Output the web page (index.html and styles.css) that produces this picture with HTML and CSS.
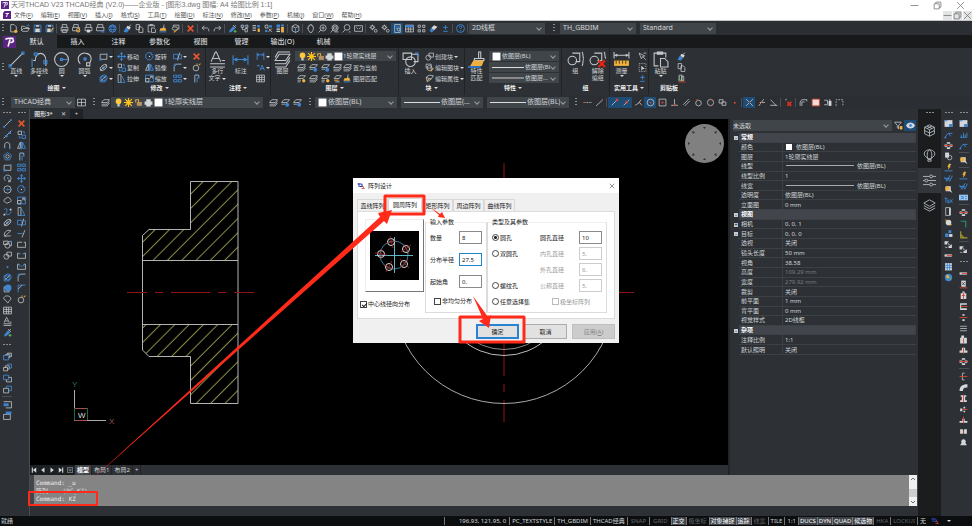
FILE: index.html
```html
<!DOCTYPE html>
<html lang="zh-CN">
<head>
    <meta charset="UTF-8">
    <meta name="viewport" content="width=device-width, initial-scale=1.0">
    <title>天河THCAD V23</title>
    <link rel="stylesheet" href="styles.css">
</head>
<body>
    <div class="app">
        <!-- Title and menu -->
        <header class="titlebar">
            <span class="app-icon" data-icon="logo"></span>
            <span class="app-title">天河THCAD V23 THCAD经典 (V2.0)——企业版 - [图形3.dwg 图幅: A4 绘图比例 1:1]</span>
            <div class="window-buttons" data-tools="min restore close"></div>
        </header>
        <nav class="menubar">
            <span class="app-icon" data-icon="file"></span>
            <a href="#">文件(<u>F</u>)</a>
            <a href="#">编辑(<u>E</u>)</a>
            <a href="#">视图(<u>V</u>)</a>
            <a href="#">插入(<u>I</u>)</a>
            <a href="#">格式(<u>S</u>)</a>
            <a href="#">工具(<u>T</u>)</a>
            <a href="#">绘图(<u>D</u>)</a>
            <a href="#">标注(<u>N</u>)</a>
            <a href="#">修改(<u>M</u>)</a>
            <a href="#">参数(<u>P</u>)</a>
            <a href="#">机械(<u>J</u>)</a>
            <a href="#">窗口(<u>W</u>)</a>
            <a href="#">帮助(<u>H</u>)</a>
            <div class="child-buttons" data-tools="min restore close"></div>
        </nav>

        <!-- Standard toolbar -->
        <div class="bar">
            <span class="grip"></span>
            <div class="tools" data-tools="new open save saveas | print preview publish plot globe | brush copy paste pasteas copydoc | erase | undo redo | dropper tree blocks xref palette | cube | hand zoom zoomwin zoomprev zoomext | gears gears sheet* table calc eraser plusminus | help |"></div>
            <div class="combo w76"><select aria-label="视觉样式"><option>2D线框</option></select></div>
            <span class="grip spaced"></span>
            <div class="combo w76"><select aria-label="标注样式"><option>TH_GBDIM</option></select></div>
            <div class="combo w76 gap-left"><select aria-label="文字样式"><option>Standard</option></select></div>
        </div>

        <!-- Ribbon tabs -->
        <nav class="ribbon-tabs">
            <span class="ribbon-logo" data-icon="logo"></span>
            <button class="active">默认</button>
            <button>插入</button>
            <button>注释</button>
            <button>参数化</button>
            <button>视图</button>
            <button>管理</button>
            <button>输出(O)</button>
            <button>机械</button>
        </nav>

        <!-- Ribbon -->
        <div class="ribbon">
            <section class="panel draw">
                <div class="panel-body">
                    <span class="grip"></span>
                    <button class="big"><i data-icon="line"></i>直线<b class="caret"></b></button>
                    <button class="big"><i data-icon="pline"></i>多段线<b class="caret"></b></button>
                    <button class="big"><i data-icon="circle"></i>圆<b class="caret"></b></button>
                    <button class="big"><i data-icon="arc"></i>圆弧<b class="caret"></b></button>
                    <div class="stack">
                        <button class="small"><i data-icon="rect"></i><b class="caret"></b></button>
                        <button class="small"><i data-icon="ellipse"></i><b class="caret"></b></button>
                        <button class="small"><i data-icon="region"></i><b class="caret"></b></button>
                    </div>
                </div>
                <h2>绘图<b class="caret"></b></h2>
            </section>
            <section class="panel modify">
                <div class="panel-body">
                    <div class="stack">
                        <button class="small"><i data-icon="move"></i>移动</button>
                        <button class="small"><i data-icon="copyobj"></i>复制</button>
                        <button class="small"><i data-icon="stretch"></i>拉伸</button>
                    </div>
                    <div class="stack">
                        <button class="small"><i data-icon="rotate"></i>旋转</button>
                        <button class="small"><i data-icon="mirror"></i>镜像</button>
                        <button class="small"><i data-icon="scale"></i>缩放</button>
                    </div>
                    <div class="stack">
                        <button class="small"><i data-icon="trim"></i><b class="caret"></b></button>
                        <button class="small"><i data-icon="fillet"></i><b class="caret"></b></button>
                        <button class="small"><i data-icon="array"></i><b class="caret"></b></button>
                    </div>
                    <div class="stack" data-tools="erase explode offset"></div>
                </div>
                <h2>修改<b class="caret"></b></h2>
            </section>
            <section class="panel annotate">
                <div class="panel-body">
                    <button class="big"><i data-icon="mtext"></i><span>多行<br>文字 <b class="caret"></b></span></button>
                    <button class="big"><i data-icon="dim"></i>标注</button>
                    <div class="stack">
                        <button class="small"><i data-icon="dimlin"></i><b class="caret"></b></button>
                        <button class="small"><i data-icon="leader"></i><b class="caret"></b></button>
                        <button class="small"><i data-icon="table2"></i></button>
                    </div>
                </div>
                <h2>注释<b class="caret"></b></h2>
            </section>
            <section class="panel layer">
                <div class="panel-body">
                    <button class="big"><i data-icon="layers"></i>图层</button>
                    <div class="stack">
                        <div class="combo small-combo">
                            <i data-icon="bulb"></i><i data-icon="sun"></i><i data-icon="lock"></i><i data-icon="printer"></i><i data-icon="swatch"></i>
                            <select aria-label="图层"><option>1轮廓实线层</option></select>
                        </div>
                        <div class="tool-row"><div class="tools" data-tools="layer layerb layerb layer"></div><button class="small"><i data-icon="layer"></i>置为当前</button></div>
                        <div class="tool-row"><div class="tools" data-tools="layero layer layero layery"></div><button class="small"><i data-icon="pasteas"></i>图层匹配</button></div>
                    </div>
                </div>
                <h2>图层<b class="caret"></b></h2>
            </section>
            <section class="panel block">
                <div class="panel-body">
                    <button class="big"><i data-icon="insert"></i>插入</button>
                    <div class="stack">
                        <button class="small"><i data-icon="block"></i>创建块<b class="caret"></b></button>
                        <button class="small"><i data-icon="blockedit"></i>编辑图块<b class="caret"></b></button>
                        <button class="small"><i data-icon="blockattr"></i>编辑属性<b class="caret"></b></button>
                    </div>
                </div>
                <h2>块<b class="caret"></b></h2>
            </section>
            <section class="panel props">
                <div class="panel-body">
                    <button class="big"><i data-icon="match"></i>特性<br>匹配</button>
                    <div class="stack">
                        <div class="combo small-combo"><i data-icon="swatch"></i><select aria-label="颜色"><option>依图层(BL)</option></select></div>
                        <div class="combo small-combo"><span class="sample"></span><select aria-label="线型"><option>依图层(BL)</option></select></div>
                        <div class="combo small-combo"><span class="sample thick"></span><select aria-label="线宽"><option>依图层...</option></select></div>
                    </div>
                </div>
                <h2>特性<b class="caret"></b></h2>
            </section>
            <section class="panel group">
                <div class="panel-body">
                    <button class="big"><i data-icon="group"></i>组</button>
                    <button class="big"><i data-icon="ungroup"></i>解除<br>编组</button>
                </div>
                <h2>组</h2>
            </section>
            <section class="panel utility">
                <div class="panel-body">
                    <button class="big"><i data-icon="measure"></i>测量<b class="caret"></b></button>
                    <div class="stack" data-tools="pick select plusminus"></div>
                </div>
                <h2>实用工具<b class="caret"></b></h2>
            </section>
            <section class="panel clipboard">
                <div class="panel-body">
                    <button class="big"><i data-icon="paste"></i>粘贴<b class="caret"></b></button>
                    <div class="stack" data-tools="brush copy copybase"></div>
                </div>
                <h2>剪贴板</h2>
            </section>
        </div>

        <!-- Layer and properties toolbar -->
        <div class="bar layer-bar">
            <span class="grip"></span>
            <div class="combo w64 gap-left"><select aria-label="工作空间"><option>THCAD经典</option></select></div>
            <div class="tools" data-tools="grid"></div>
            <span class="grip spaced"></span>
            <div class="tools" data-tools="layer"></div>
            <div class="combo w152">
                <i data-icon="bulb"></i><i data-icon="sun"></i><i data-icon="lock"></i><i data-icon="printer"></i><i data-icon="swatch"></i>
                <select aria-label="当前图层"><option>1轮廓实线层</option></select>
            </div>
            <div class="tools gap-left" data-tools="layer layerb layerb"></div>
            <span class="grip spaced"></span>
            <div class="combo w82"><i data-icon="swatch"></i><select aria-label="当前颜色"><option>依图层(BL)</option></select></div>
            <div class="combo w82 gap-left"><span class="sample long"></span><select aria-label="当前线型"><option>依图层(...</option></select></div>
            <div class="combo w82 gap-left"><span class="sample long"></span><select aria-label="当前线宽"><option>依图层(BL)</option></select></div>
            <span class="grip spaced"></span>
            <div class="tools" data-tools="snaptrack snapfrom | snapend* snapmid* snapint snapcen* snapnode snapperp snappar snaptan snapquad snapins snapnear | snapx* snapext snapang | snapoff | snaparc snapbox snapset snapdot"></div>
        </div>

        <div class="workspace">
            <!-- Draw and modify toolbars -->
            <aside class="left-tools">
                <div class="column"><span class="grip-h"></span><div class="tools" data-tools="line xline polyline polygon rect arc circle cloud spline ellipse earc insert block point region hatch boundary table2 mtext dropper"></div>
                    <span class="grip-h next"></span><div class="tools" data-tools="front back above under | viewl viewr"></div></div>
                <div class="column"><span class="grip-h"></span><div class="tools" data-tools="erase copyobj mirror offset array move rotate scale stretch trim extend break breakat join fillet chamfer explode"></div></div>
            </aside>

            <main class="center">
                <div class="doc-tabs">
                    <button class="doc">图形3*</button>
                    <button aria-label="关闭">✕</button>
                    <button class="add" aria-label="新建">+</button>
                </div>
                <div class="middle">
                    <div class="viewport">
                        <div class="canvas">
                            <svg class="drawing" aria-label="图形">
                                <defs>
                                    <pattern id="hatch" width="10.13" height="10" patternUnits="userSpaceOnUse" patternTransform="rotate(45)">
                                        <path d="M8.7 0V10" stroke="#90904a" stroke-width="1"/>
                                    </pattern>
                                </defs>
                                <g transform="translate(-30 -119)" fill="none">
                                    <g fill="url(#hatch)">
                                        <path d="M142.5 260.5V235.5L149 229.5H190.5V181.5H238V260.5Z"/>
                                        <path d="M142.5 324.5V350L149 356.5H190.5V403.5H238V324.5Z"/>
                                    </g>
                                    <path d="M142.5 235.5L149 229.5H190.5V181.5H238V403.5H190.5V356.5H149L142.5 350ZM142.5 260.5H238M142.5 324.5H238" stroke="#b4b4b4"/>
                                    <path d="M127 292.5h20m8 0h8m8 0h39m8 0h8m8 0h20M619 292.5h15M504 163v25M504 343v33m0 8v8m0 8v22" stroke="#8e1515"/>
                                    <circle cx="504" cy="292.5" r="111" stroke="#aaa"/>
                                    <circle cx="504" cy="292.5" r="63" stroke="#bbb"/>
                                    <circle cx="504" cy="292.5" r="57" stroke="#888"/>
                                    <circle cx="704.5" cy="143.5" r="19.5" fill="#808080"/>
                                    <path d="M703 127h3l-1.5 2zM703 160h3l-1.5-2zM688 142v3l2-1.5zM721 142v3l-2-1.5zM692 131l3 1-2 2zM717 131l-3 1 2 2zM692 156l3-1-2-2zM717 156l-3-1 2-2z" fill="#333"/>
                                    <path d="M74.5 390V420.5H106" stroke="#aaa"/>
                                    <path d="M75 408.5H87.5M75 420.5H87" stroke="#a05050"/>
                                    <path d="M87.5 408V420M74.5 408V420" stroke="#1d6b45"/>
                                    <text class="axis" x="78" y="418" fill="#ddd">W</text>
                                    <text class="axis" x="109" y="424" fill="#9a5555">X</text>
                                    <text class="axis" x="72" y="387" fill="#2a7550">Y</text>
                                </g>
                            </svg>

                            <!-- Array dialog -->
                            <form class="dialog" role="dialog" aria-label="阵列设计">
                                <div class="dialog-title"><i data-icon="dlg"></i>阵列设计<button type="button" class="dialog-close" data-icon="closedark" aria-label="关闭"></button></div>
                                <div class="dialog-tabs">
                                    <button type="button">直线阵列</button>
                                    <button type="button" class="active">圆周阵列</button>
                                    <button type="button">矩形阵列</button>
                                    <button type="button">周边阵列</button>
                                    <button type="button">曲线阵列</button>
                                </div>
                                <div class="dialog-page">
                                    <div class="preview-col">
                                        <div class="preview">
                                            <svg viewBox="0 0 49 49" fill="none">
                                                <rect width="49" height="49" fill="#000"/>
                                                <circle cx="24" cy="24" r="14" stroke="#2f8296"/>
                                                <path d="M5 24.5H43M24.5 6V42" stroke="#5fb6c6"/>
                                                <g stroke="#ddd"><circle cx="21" cy="11" r="3.5"/><circle cx="36" cy="18" r="3.5"/><circle cx="34" cy="33" r="3.5"/><circle cx="19" cy="36" r="3.5"/><circle cx="11" cy="23" r="3.5"/></g>
                                                <path d="M20 5l3 12M17 12l9-2M31 21l10-7M34 13l5 10M30 28l9 9M38 28l-8 9M16 41l6-11M14 34l9 4M5 22l12 2M11 18v10" stroke="#b32626" stroke-width=".8"/>
                                            </svg>
                                        </div>
                                        <label><input type="checkbox" checked>中心线径向分布</label>
                                    </div>
                                    <fieldset class="inputs">
                                        <legend>输入参数</legend>
                                        <label>数量<input type="text" value="8"></label>
                                        <label>分布半径<input type="text" class="focus" value="27.5"></label>
                                        <label>起始角<input type="text" value="0."></label>
                                        <label class="check"><input type="checkbox">非均匀分布</label>
                                    </fieldset>
                                    <fieldset class="types">
                                        <legend>类型及其参数</legend>
                                        <label><input type="radio" name="hole" checked>圆孔</label>
                                        <label class="field">圆孔直径<input type="text" value="10"></label>
                                        <label><input type="radio" name="hole">双圆孔</label>
                                        <label class="field off">内孔直径<input type="text" value="5." disabled></label>
                                        <label class="field off second">外孔直径<input type="text" value="6." disabled></label>
                                        <label><input type="radio" name="hole">螺纹孔</label>
                                        <label class="field off">公称直径<input type="text" value="5." disabled></label>
                                        <label><input type="radio" name="hole">任意选择集</label>
                                        <label class="off polar"><input type="checkbox" disabled>极坐标阵列</label>
                                    </fieldset>
                                </div>
                                <div class="dialog-footer">
                                    <button type="button" class="ok">确定</button>
                                    <button type="button">取消</button>
                                    <button type="button" disabled>应用(<u>A</u>)</button>
                                </div>
                            </form>
                        </div>
                        <div class="layout-tabs">
                            <div class="tools" data-tools="first prev next last list"></div>
                            <button class="active">模型</button>
                            <button>布局1</button>
                            <button>布局2</button>
                            <button class="add" aria-label="新建布局">+</button>
                        </div>
                    </div>

                    <!-- Properties palette -->
                    <aside class="properties">
                        <div class="selection">
                            <div class="combo"><select aria-label="选择"><option>未选取</option></select></div>
                            <div class="tools" data-tools="filter eye*"></div>
                        </div>
                        <table>
                            <colgroup><col class="col-toggle"><col class="col-name"><col></colgroup>
                            <tr class="head"><td>-</td><th colspan="2">常规</th></tr>
                            <tr><td></td><th>颜色</th><td><span class="white-box"></span>依图层(BL)</td></tr>
                            <tr><td></td><th>图层</th><td>1轮廓实线层</td></tr>
                            <tr><td></td><th>线型</th><td><span class="rule"></span>依图层(BL)</td></tr>
                            <tr><td></td><th>线型比例</th><td>1</td></tr>
                            <tr><td></td><th>线宽</th><td><span class="rule"></span>依图层(BL)</td></tr>
                            <tr><td></td><th>透明度</th><td>依图层(BL)</td></tr>
                            <tr><td></td><th>立面图</th><td>0 mm</td></tr>
                            <tr class="head"><td>-</td><th colspan="2">视图</th></tr>
                            <tr class="sub"><td>+</td><th>相机</th><td>0, 0, 1</td></tr>
                            <tr class="sub"><td>-</td><th>目标</th><td>0, 0, 0</td></tr>
                            <tr><td></td><th>透视</th><td>关闭</td></tr>
                            <tr><td></td><th>镜头长度</th><td>50 mm</td></tr>
                            <tr><td></td><th>视角</th><td>38.58</td></tr>
                            <tr class="dim"><td></td><th>高度</th><td>109.29 mm</td></tr>
                            <tr class="dim"><td></td><th>宽度</th><td>279.92 mm</td></tr>
                            <tr><td></td><th>裁剪</th><td>关闭</td></tr>
                            <tr><td></td><th>前平面</th><td>1 mm</td></tr>
                            <tr><td></td><th>背平面</th><td>0 mm</td></tr>
                            <tr><td></td><th>视觉样式</th><td>2D线框</td></tr>
                            <tr class="head"><td>-</td><th colspan="2">杂项</th></tr>
                            <tr><td></td><th>注释比例</th><td>1:1</td></tr>
                            <tr><td></td><th>默认照明</th><td>关闭</td></tr>
                        </table>
                    </aside>
                </div>

                <!-- Command line -->
                <div class="command">
                    <div class="command-text">
                        <p>Command: _u</p>
                        <p class="clipped">阵列... (PC_KZ)</p>
                        <p><label for="cmd">Command:</label> <input id="cmd" type="text" value="KZ"></p>
                    </div>
                    <div class="scroll"><span data-icon="up"></span><b></b><span data-icon="down"></span></div>
                </div>
            </main>

            <aside class="side-tabs">
                <span class="grip-h"></span>
                <button data-icon="box3d" aria-label="模型"></button>
                <button data-icon="balloon" aria-label="渲染"></button>
                <button data-icon="sliders" class="active" aria-label="特性"></button>
                <button data-icon="stack" aria-label="图层"></button>
            </aside>

            <!-- Mechanical toolbars -->
            <aside class="right-tools">
                <div class="column"><span class="grip-h"></span><div class="tools" data-tools="frame note bearing sheet2 bolt rough magnify textb door gear parts part pin bom globe2"></div></div>
                <div class="column"><span class="grip-h"></span><div class="tools" data-tools="frame dimb note | magnify | bolt rough dimtag | bearing corner angle | part"></div>
                    <span class="grip-h next"></span><div class="tools" data-tools="pin shaft nut section cross spring crate screw bearing | axis elbow seat hub flange key boss"></div></div>
            </aside>
        </div>

        <!-- Status bar -->
        <footer class="status">
            <span class="ready">就绪</span>
            <span class="coords">196.93, 121.95, 0</span>
            <button class="on">PC_TEXTSTYLE</button>
            <button class="on">TH_GBDIM</button>
            <button class="on">THCAD经典</button>
            <button class="wide">SNAP</button>
            <button class="wide">GRID</button>
            <button class="lit">正交</button>
            <button>极坐标</button>
            <button class="lit">对象捕捉</button>
            <button class="lit">追踪</button>
            <button>线宽</button>
            <button class="on">TILE</button>
            <button class="on">1:1</button>
            <button class="lit">DUCS</button>
            <button class="lit">DYN</button>
            <button class="lit">QUAD</button>
            <button class="lit">候选物</button>
            <button>HKA</button>
            <button>LOCKUI</button>
            <button class="on">无</button>
            <span class="tray"><i data-icon="dlg"></i><b class="caret"></b></span>
        </footer>

        <!-- Step markers -->
        <svg class="markers" aria-hidden="true">
            <g fill="none" stroke="#ff2a1a" stroke-width="3" stroke-linejoin="round">
                <rect x="385" y="196" width="39" height="18"/>
                <rect x="460" y="317" width="64" height="25"/>
                <rect x="29" y="492" width="68" height="13" stroke-width="2"/>
            </g>
            <g fill="#ff2a1a">
                <path d="M88 483L380 217L378 213L392 210L387 224L384 221Z"/>
                <path d="M430 207L440 214L442 212L445 218L438 217L439 215Z"/>
                <path d="M473 296L488 317L491 315L489 328L479 321L483 319Z"/>
            </g>
        </svg>
    </div>
    <script src="script.js"></script>
</body>
</html>
```
FILE: styles.css
```css
/* General Styling */
* {
    box-sizing: border-box;
}

body {
    margin: 0;
    background: #2d3135;
    color: #d2d5d8;
    font-family: "Noto Sans", "Noto Sans CJK SC", sans-serif;
    font-size: 6px;
    line-height: 8px;
}

button, input, select {
    font: inherit;
    color: inherit;
    margin: 0;
    padding: 0;
    border: 0;
    background: none;
}

a {
    color: inherit;
    text-decoration: none;
}

i {
    font-style: normal;
}

svg {
    display: block;
}

.app {
    position: relative;
    display: flex;
    flex-direction: column;
    min-height: 100vh;
    overflow: hidden;
}

/* Icon strokes */
.s { fill: none; stroke: #c3c7ca; stroke-width: 1.4; }
.b { fill: none; stroke: #3f86d2; stroke-width: 1.6; }
.r { fill: none; stroke: #d8452f; stroke-width: 1.6; }
.o { fill: none; stroke: #e8a63c; stroke-width: 1.8; }
.k { fill: none; stroke: #333; stroke-width: 1.4; }
.sf { fill: #d4d7da; }
.bf { fill: #3f86d2; }
.rf { fill: #d8452f; }
.of { fill: #f0b040; }

/* Title and menu */
.titlebar, .menubar {
    display: flex;
    align-items: center;
    height: 10px;
    background: #fff;
    color: #777;
}

.titlebar {
    font-family: "Liberation Sans", "Noto Sans CJK SC", sans-serif;
    font-size: 7px;
}

.titlebar .app-icon {
    width: 11px;
    padding-left: 1px;
}

.app-icon svg {
    width: 8px;
    height: 8px;
}

.menubar {
    height: 11px;
    gap: 8px;
    border-bottom: 1px solid #c4c6c8;
    color: #555;
}

.menubar .app-icon {
    margin: 0 -5px 0 3px;
}

.window-buttons, .child-buttons {
    display: flex;
    margin-left: auto;
}

.window-buttons {
    gap: 11px;
    padding-right: 6px;
}

.child-buttons {
    gap: 1px;
}

.child-buttons .tool {
    width: 9px;
    height: 9px;
    background: #e2e4e6;
}

.window-buttons svg {
    width: 7px;
    height: 7px;
}

.child-buttons svg {
    width: 5px;
    height: 5px;
}

.titlebar .s, .menubar .s {
    stroke: #777;
}

/* Toolbars */
.bar {
    display: flex;
    align-items: center;
    height: 14px;
    background: #2b2f34;
}

.tools {
    display: flex;
}

.tool {
    display: flex;
    align-items: center;
    justify-content: center;
    width: 12px;
    height: 11px;
}

.tool svg, .small svg, .combo svg {
    width: 9px;
    height: 9px;
}

.tool.on {
    background: #1f4c75;
}

.sep {
    width: 1px;
    height: 9px;
    margin: 1px;
    background: #4a4f54;
}

.grip {
    width: 2px;
    height: 9px;
    margin: 0 3px 0 2px;
    background: repeating-linear-gradient(#8a8e92 0 1px, transparent 1px 3px);
}

.grip.spaced {
    margin: 0 5px 0 8px;
}

.layer-bar .grip.spaced {
    margin: 0 4px 0 6px;
}

.grip-h {
    width: 8px;
    height: 1px;
    margin: 3px auto 5px;
    background: repeating-linear-gradient(90deg, #8a8e92 0 2px, transparent 2px 3px);
}

.grip-h.next {
    margin: 6px auto;
}

.gap-left {
    margin-left: 4px;
}

.combo {
    position: relative;
    display: flex;
    align-items: center;
    height: 11px;
    padding: 0 9px 0 3px;
    gap: 1px;
    background: #40454a;
    font-size: 7px;
}

.combo i {
    flex: none;
}

.combo select {
    flex: 1;
    min-width: 0;
    height: 10px;
    appearance: none;
    outline: none;
}

.combo option {
    background: #40454a;
}

.combo::after {
    content: "";
    position: absolute;
    right: 4px;
    top: 3px;
    width: 3px;
    height: 3px;
    border: solid #9a9ea2;
    border-width: 0 1px 1px 0;
    transform: rotate(45deg);
}

.w64 { width: 64px; }
.w76 { width: 76px; }
.w82 { width: 82px; }
.w152 { width: 152px; }

.sample {
    width: 32px;
    height: 1px;
    background: #ddd;
}

.sample.thick {
    height: 2px;
    background: #888;
}

.sample.long {
    width: 36px;
}

/* Ribbon tabs */
.ribbon-tabs {
    display: flex;
    height: 13px;
    background: #17191b;
    font-size: 7px;
}

.ribbon-tabs button {
    width: 41px;
    font-weight: 500;
}

.ribbon-tabs .active {
    background: #2d3135;
}

.ribbon-logo {
    padding: 1px 0 0 3px;
    background: #2d3135;
}

.ribbon-logo svg {
    width: 13px;
    height: 13px;
}

/* Ribbon */
.ribbon {
    display: flex;
    height: 47px;
    background: #2d3135;
}

.panel {
    display: flex;
    flex-direction: column;
    border-right: 1px solid #202326;
}

.panel:last-child {
    border-right: 0;
}

.panel h2 {
    display: flex;
    align-items: center;
    justify-content: center;
    gap: 2px;
    margin: 0;
    font-size: 6px;
    line-height: 8px;
    font-weight: 700;
    color: #f0f0f0;
}

.panel-body {
    display: flex;
    height: 36px;
    padding-top: 3px;
}

.panel-body > .grip {
    align-self: center;
    margin-right: 1px;
}

.draw { width: 114px; }
.modify { width: 92px; }
.annotate { width: 65px; }
.layer { width: 128px; }
.block { width: 66px; }
.props { width: 97px; }
.group { width: 48px; }
.utility { width: 39px; }
.clipboard { width: 40px; }

.big {
    display: flex;
    flex-direction: column;
    align-items: center;
    width: 23px;
    line-height: 7px;
    white-space: nowrap;
}

.big svg {
    width: 17px;
    height: 17px;
}

.big .s, .big .b {
    stroke-width: 1;
}

.caret {
    display: inline-block;
    border: 2px solid transparent;
    border-top-color: #ddd;
    border-bottom: 0;
}

.stack {
    display: flex;
    flex-direction: column;
    margin-left: 3px;
}

.stack .small, .stack .tool-row {
    height: 11px;
}

.small {
    display: flex;
    align-items: center;
    gap: 1px;
    white-space: nowrap;
}

.modify .stack {
    width: 27px;
}

.modify .stack:nth-child(n+3) {
    width: 16px;
}

.annotate .panel-body {
    gap: 1px;
}

.tool-row {
    display: flex;
}

.small-combo {
    height: 10px;
    margin-bottom: 1px;
    font-size: 6px;
}

.layer .small-combo {
    width: 101px;
    gap: 0;
}

.layer .stack {
    margin-left: 1px;
}

.props .small-combo {
    width: 70px;
}

.props .stack {
    margin-left: 1px;
}

.group .panel-body {
    padding-left: 2px;
}

/* Workspace */
.workspace {
    flex: 1;
    display: grid;
    grid-template-columns: 30px 1fr 23px 31px;
}

.left-tools, .right-tools {
    display: flex;
    background: #2d3135;
}

.left-tools {
    border-right: 1px solid #484c50;
}

.column {
    display: flex;
    flex-direction: column;
    width: 15px;
}

.column .tools {
    flex-direction: column;
    align-items: center;
}

.column .sep {
    width: 10px;
    height: 1px;
    margin: 1px 0 2px;
}

.center {
    display: flex;
    flex-direction: column;
    min-width: 0;
    padding-bottom: 10px;
}

.doc-tabs {
    display: flex;
    height: 10px;
    background: #2d3135;
}

.doc-tabs button {
    width: 13px;
}

.doc-tabs .doc {
    width: 27px;
    font-weight: 700;
}

.doc-tabs .add {
    background: #202326;
}

.middle {
    flex: 1;
    display: flex;
}

.viewport {
    flex: 1;
    display: flex;
    flex-direction: column;
}

.canvas {
    position: relative;
    flex: 1;
    background: #000;
    overflow: hidden;
}

.drawing {
    position: absolute;
    width: 100%;
    height: 100%;
}

.axis {
    font: 8px "Liberation Sans", sans-serif;
}

.layout-tabs {
    display: flex;
    height: 10px;
}

.layout-tabs button {
    padding: 0 2px;
    border-right: 1px solid #202326;
}

.layout-tabs .tool {
    width: 9px;
    height: 10px;
    padding: 0;
    background: #1c1f22;
}

.layout-tabs .tool svg {
    width: 6px;
    height: 6px;
}

.layout-tabs .active {
    background: #40454a;
    font-weight: 700;
    color: #fff;
}

/* Properties Palette */
.properties {
    width: 190px;
    padding: 1px 2px 0 3px;
    border-left: 2px solid #222528;
}

.selection {
    display: flex;
    height: 13px;
}

.selection .combo {
    flex: 1;
    padding-left: 0;
    font-size: 6px;
}

.properties table {
    width: 100%;
    height: 222px;
    table-layout: fixed;
    border-spacing: 0;
    line-height: 8px;
}

.col-toggle {
    width: 6px;
}

.col-name {
    width: 44px;
}

.properties td, .properties th {
    padding: 0 0 0 2px;
    border-bottom: 1px solid #3c4146;
    font-weight: 400;
    text-align: left;
    white-space: nowrap;
}

.properties td:first-child {
    padding: 0;
    border: 0;
    text-align: center;
}

.properties th {
    border-right: 1px solid #3c4146;
}

.properties .head th {
    background: #42464c;
    font-weight: 700;
    color: #fff;
}

.properties .head td, .properties .sub td:first-child {
    background: linear-gradient(#c8ccd0, #c8ccd0) center / 4px 4px no-repeat;
    color: #222;
    line-height: 4px;
}

.properties .dim td {
    color: #777b7f;
}

.white-box {
    display: inline-block;
    width: 6px;
    height: 6px;
    margin: 0 4px 0 1px;
    background: #fff;
    vertical-align: -1px;
}

.rule {
    display: inline-block;
    width: 68px;
    height: 1px;
    margin: 0 3px 2px 1px;
    background: #aaa;
}

/* Command Line */
.command {
    display: flex;
    height: 31px;
    padding-left: 4px;
    background: #42464a;
}

.command-text {
    flex: 1;
    padding: 4px 2px 0;
    background: #848484;
    color: #f0f0f0;
    font-family: "DejaVu Sans Mono", "Noto Sans CJK SC", monospace;
}

.command-text p {
    margin: 0;
    height: 8px;
}

.command-text .clipped {
    overflow: hidden;
    color: #ddd;
}

.command-text input {
    width: 60px;
    height: 8px;
    outline: none;
}

.scroll {
    display: flex;
    flex-direction: column;
    justify-content: space-between;
    width: 8px;
    margin-right: 1px;
    background: #f0f0f0;
}

.scroll b {
    height: 8px;
    margin-top: 5px;
    background: #cdcdcd;
}

.scroll svg {
    width: 8px;
    height: 8px;
}

/* Side Tabs */
.side-tabs {
    display: flex;
    flex-direction: column;
    background: #1a1c1e;
}

.side-tabs button {
    display: flex;
    align-items: center;
    justify-content: center;
    height: 25px;
}

.side-tabs svg {
    width: 13px;
    height: 13px;
}

.side-tabs .s {
    stroke-width: 1;
}

.side-tabs .active {
    background: #33373c;
}

/* Status Bar */
.status {
    display: flex;
    align-items: center;
    height: 10px;
    background: #0c0d0e;
    white-space: nowrap;
}

.ready {
    margin-right: auto;
    padding-left: 1px;
}

.coords {
    padding: 0 3px 0 14px;
    border-left: 1px solid #777;
}

.status button {
    height: 8px;
    padding: 0 2px;
    border-left: 1px solid #777;
    color: #62666a;
}

.status .wide {
    padding: 0 3px;
}

.status .on {
    color: #d2d5d8;
}

.status .lit {
    padding: 0 1px;
    background: #3d4248;
    color: #fff;
}

.tray {
    display: flex;
    align-items: center;
    gap: 8px;
    width: 44px;
    padding-left: 3px;
}

.tray svg {
    width: 8px;
    height: 8px;
}

/* Dialog */
.dialog {
    position: absolute;
    left: 323px;
    top: 59px;
    width: 266px;
    padding: 0 4px 4px;
    background: #f0f0f0;
    color: #222;
}

.dialog-title {
    display: flex;
    align-items: center;
    gap: 3px;
    height: 15px;
    margin: 0 -4px 5px;
    padding: 0 4px;
    background: #fff;
}

.dialog-title svg {
    width: 8px;
    height: 8px;
}

.dialog-close {
    margin-left: auto;
}

.dialog-close svg {
    width: 6px;
    height: 6px;
}

.dialog-tabs {
    display: flex;
    align-items: flex-end;
    height: 13px;
}

.dialog-tabs button {
    width: 31px;
    height: 12px;
    border: 1px solid #d9d9d9;
    border-bottom: 0;
}

.dialog-tabs .active {
    width: 34px;
    height: 13px;
    background: #fff;
}

.dialog-page {
    display: grid;
    grid-template-columns: 60px 62px 1fr;
    padding: 6px 7px 5px;
    background: #fff;
    border: 1px solid #dcdcdc;
}

.preview-col {
    display: flex;
    flex-direction: column;
    justify-content: space-between;
    margin-left: -5px;
    padding: 1px 0 5px;
    white-space: nowrap;
}

.preview {
    width: 59px;
    margin-left: 5px;
    padding: 11px 5px 11px 4px;
    border: 1px solid #eee;
    border-right-color: #777;
    border-bottom: 1px solid #777;
}

.preview svg {
    width: 49px;
    height: 49px;
}

.dialog label {
    display: flex;
    align-items: center;
    gap: 1px;
}

.dialog fieldset {
    min-width: 0;
    margin: 0;
    padding: 5px 4px 4px;
    border: 1px solid #dcdcdc;
    border-top-color: #eee;
}

.dialog legend {
    padding: 0;
    height: 8px;
}

.inputs {
    display: flex;
    flex-direction: column;
    gap: 9px;
}

.inputs label {
    justify-content: space-between;
    white-space: nowrap;
}

.inputs .check {
    justify-content: flex-start;
    margin-left: 4px;
}

.dialog input[type="text"] {
    width: 23px;
    height: 13px;
    padding: 0 2px;
    border: 1px solid #8a8a8a;
    background: #fff;
    outline: none;
}

.dialog input[type="text"].focus {
    border-color: #1c84c8;
}

.dialog input[type="text"]:disabled {
    border-color: #ccc;
    color: #999;
}

.dialog input[type="checkbox"], .dialog input[type="radio"] {
    appearance: none;
    flex: none;
    width: 7px;
    height: 7px;
    border: 1px solid #444;
    background: #fff;
}

.dialog input[type="radio"] {
    border-radius: 50%;
}

.dialog input[type="radio"]:checked {
    background: radial-gradient(#222 0 1px, #fff 2px);
}

.dialog input[type="checkbox"]:checked::after {
    content: "";
    display: block;
    width: 2px;
    height: 4px;
    margin-left: 2px;
    border: solid #222;
    border-width: 0 1px 1px 0;
    transform: rotate(45deg);
}

.types {
    display: grid;
    grid-template-columns: 48px 1fr;
    grid-auto-rows: 13px;
    row-gap: 3px;
    align-content: start;
}

.types .field {
    justify-content: space-between;
}

.types .second {
    grid-column: 2;
}

.types .off {
    color: #999;
}

.dialog .off input {
    border-color: #bbb;
}

.types .polar {
    padding-left: 12px;
}

.dialog-footer {
    display: flex;
    justify-content: flex-end;
    gap: 5px;
    padding-top: 5px;
}

.dialog-footer button {
    width: 43px;
    height: 15px;
    border: 1px solid #adadad;
    background: #e1e1e1;
}

.dialog-footer .ok {
    border: 2px solid #2a83d0;
}

.dialog-footer button:disabled {
    border-color: #bfbfbf;
    background: #ccc;
    color: #888;
}

/* Step Markers */
.markers {
    position: absolute;
    inset: 0;
    width: 100%;
    height: 100%;
    pointer-events: none;
}
```
FILE: script.js
```js
// Icon shapes on a 16x16 grid
const ICONS = {
    logo: '<path fill="#5b2482" d="M0 0h16v16H0z"/><path d="M3 4c4-2 7-1 10-1M9 4c-2 3-1 6-3 9M9 8c3 0 5-1 3-4" fill="none" stroke="#fff" stroke-width="2"/>',
    file: '<path fill="#5b2482" d="M3 0h13v16H0V4z"/><path d="M5 5h7M9 5l-2 7" stroke="#fff" stroke-width="2"/>',
    dlg: '<path fill="none" stroke="#2c3fae" stroke-width="2" d="M1 4h9v5H5M4 2v8M8 9h4"/><path class="r" d="M9 13h6M11 7l3 6"/>',
    min: '<path class="s" d="M1 8h14"/>',
    restore: '<path class="s" d="M2 5h9v9H2zM5 5V2h9v9h-3"/>',
    close: '<path class="s" d="M2 2l12 12M14 2L2 14"/>',
    closedark: '<path class="k" d="M2 2l12 12M14 2L2 14"/>',
    new: '<path class="s" d="M3 1h6l4 4v9H3z"/><circle class="of" cx="12" cy="13" r="3"/>',
    open: '<path class="s" d="M1 12V4h5l2 2h5v3M1 12l3-4h11l-3 5H2"/><path class="b" d="M10 4l3-3 2 3"/>',
    save: '<path class="b" d="M2 2h12v12H2z"/><path class="sf" d="M4 8h8v6H4zM5 2h6v3H5z"/>',
    saveas: '<path class="b" d="M2 2h12v12H2z"/><path class="sf" d="M4 8h6v6H4zM5 2h6v3H5z"/><path class="o" d="M9 14l6-7"/>',
    print: '<path class="s" d="M4 6V1h8v5M2 6h12v6H2zM4 10h8v5H4z"/>',
    preview: '<path class="s" d="M3 6V1h8v5M1 6h12v6H1z"/><circle class="o" cx="11" cy="11" r="3"/>',
    publish: '<path class="s" d="M4 6V1h8v5M2 6h12v6H2z"/><path class="sf" d="M5 10h6v5H5z"/>',
    plot: '<path class="s" d="M3 6V1h9v5M1 6h13v6H1z"/><path class="b" d="M9 14h6M12 10v5"/>',
    globe: '<circle class="b" cx="8" cy="8" r="6.5"/><path class="b" d="M2 5h12M2 10h12M8 1c-4 4-4 10 0 14M8 1c4 4 4 10 0 14"/>',
    brush: '<path class="s" d="M14 1L8 8"/><path class="bf" d="M5 6l6 4-4 5-6-1z"/><path class="sf" d="M8 3l6 3-3 4-5-4z"/>',
    copy: '<path class="s" d="M2 1h6v9H2zM7 5h4l3 3v7H7z"/>',
    paste: '<path class="s" d="M6 14H2V2h11v4M5 1h5v2H5zM8 7h4l3 3v5H8z"/>',
    pasteas: '<path class="of" d="M2 8l9-2 2 6H1z"/><path class="b" d="M1 14h12"/><path class="s" d="M8 7l1-6"/>',
    copydoc: '<path class="s" d="M4 5V2h10v7h-3"/><ellipse class="s" cx="7" cy="8" rx="5" ry="3"/><path class="o" d="M5 15l6-5"/>',
    erase: '<path stroke="#e8552d" stroke-width="3" d="M3 3l10 10M13 3L3 13"/>',
    undo: '<path class="s" d="M6 3L2 7l4 4M2 7h8c3 0 4 2 4 6"/>',
    redo: '<path class="s" d="M10 3l4 4-4 4M14 7H6c-3 0-4 2-4 6"/>',
    dropper: '<path class="bf" d="M9 4l4 4-7 6-4 1 1-4z"/><path class="s" d="M9 2l5 5M11 5l3-3"/><path stroke="#5fae4a" stroke-width="2" d="M10 13h5M12.5 10.5v5"/>',
    tree: '<path class="s" d="M2 2h4v4H2zM10 2h4v4h-4zM4 6v4h5M9 8h4v6H9z"/><path class="bf" d="M8 2h3v3H8z"/>',
    blocks: '<path class="sf" d="M1 2h6v2H1zM1 6h6v2H1zM1 10h6v2H1z"/><path class="bf" d="M9 2h5v4H9z"/><path class="of" d="M10 8h4v6h-4z"/>',
    xref: '<path class="s" d="M2 2h5v5H2zM8 8l6 6M14 8l-6 6"/><path class="bf" d="M9 2h5v4H9zM2 10h4v4H2z"/>',
    palette: '<path class="bf" d="M1 1h6v5H1zM9 1h5v3H9z"/><path class="of" d="M9 5h5v10H9z"/><path class="sf" d="M1 8h6v2H1zM1 12h6v2H1z"/>',
    cube: '<path class="s" d="M8 1l6 3v8l-6 3-6-3V4zM2 4l6 3 6-3M8 7v8"/><path class="b" d="M8 7v7"/>',
    hand: '<path class="s" d="M4 9L2 7M4 10V4h2V2h2V1h2v2h2v2h1v5l-3 5H7z"/>',
    zoom: '<circle class="s" cx="9" cy="7" r="5.5"/><path class="s" d="M5 11l-4 4M6 7h6M9 4v6"/>',
    zoomwin: '<circle class="s" cx="9" cy="7" r="5.5"/><path class="s" d="M5 11l-4 4M6 5h6v4H6zM8 14h7"/>',
    zoomprev: '<circle class="s" cx="9" cy="6" r="5"/><path class="s" d="M6 10l-5 5M12 14h3"/>',
    zoomext: '<path class="s" d="M1 3h14v10H1zM4 6l3 3M12 6l-3 3"/>',
    gears: '<circle class="s" stroke-width="2" cx="6" cy="6" r="3"/><circle class="s" cx="12" cy="12" r="2.5"/><path class="s" d="M6 1v3M6 8v3M1 6h3M8 6h3M3 3l1 1M9 3L8 4M3 9l1-1M9 9L8 8"/>',
    sheet: '<path class="s" d="M3 1h10v14H3z"/><path class="b" d="M5 5h6M5 8h4"/><circle class="s" cx="10" cy="10" r="2.5"/>',
    table: '<path class="s" d="M1 2h14v12H1zM6 5v9M10 5v9M1 9h14"/><path class="bf" d="M1 2h14v4H1z"/>',
    calc: '<path class="s" d="M2 2h4v4H2zM10 2h4v4h-4zM2 10h4v4H2zM10 10h4v4h-4z"/>',
    eraser: '<path class="sf" d="M9 2l6 3-6 6-5-4z"/><path class="bf" d="M4 7l5 4-4 4-4-3z"/>',
    plusminus: '<path class="b" stroke-width="2" d="M8 2v8M4 6h8M4 13h8"/>',
    help: '<circle class="b" cx="8" cy="8" r="7"/><path class="b" d="M6 6c0-3 5-3 4 0L8 9M8 11v2"/>',
    line: '<path class="s" d="M2 14L14 2"/><path class="b" d="M1 13h2v2H1zM13 1h2v2h-2z"/>',
    xline: '<path class="s" d="M1 15L15 1"/><path class="bf" d="M4 9h4v4H4zM10 3h4v4h-4z"/>',
    polyline: '<path class="s" d="M3 13V7c0-6 9-6 9 0v7"/><path class="b" d="M12 8v6"/>',
    pline: '<path class="s" d="M2 9h2c0-9 10-9 10 0v5"/><path class="b" d="M1 7v8M3 2h3v2H3zM12 9h3v3h-3z"/>',
    polygon: '<path class="b" d="M8 1l7 5-3 8H4L1 6z"/><circle class="s" cx="8" cy="8" r="3"/>',
    rect: '<path class="s" d="M2 4h12v9H2z"/><path class="bf" d="M1 11h4v4H1zM12 2h3v3h-3z"/>',
    arc: '<path class="s" d="M4 12C-1 6 5 1 9 2c6 1 6 6 4 9"/><path class="s" d="M10 11h3v3h-3z"/><path class="bf" d="M7 6h3v3H7z"/>',
    circle: '<circle class="s" cx="8" cy="8" r="6.5"/><path class="b" d="M8 8h6M7 7h2v2H7z"/>',
    cloud: '<path class="s" d="M4 11c-4-1-2-7 1-6 1-4 7-3 7 0 4 1 3 6-1 6l-4 2z"/>',
    spline: '<path class="b" d="M2 5c4-6 7 0 4 5M6 10c-3 5 8 5 8-2"/><path class="sf" d="M1 12h3v3H1zM12 3h3v3h-3z"/>',
    ellipse: '<ellipse class="s" cx="8" cy="8" rx="7" ry="4" transform="rotate(-40 8 8)"/><path class="b" d="M6 7h3v3H6z"/><path class="s" d="M2 14L14 3"/>',
    earc: '<path class="s" d="M14 3C6 0 0 8 3 13l11-1"/><path class="s" d="M3 13L14 3"/>',
    point: '<path class="b" d="M7 8h2v2H7z"/>',
    region: '<path class="b" d="M2 5h9v9H2z"/><circle class="b" cx="9" cy="7" r="5.5"/><path class="s" d="M4 12l8-8"/>',
    hatch: '<path class="s" d="M2 5h9v9H2z"/><circle class="bf" cx="9" cy="7" r="6"/>',
    boundary: '<path class="s" d="M3 3c4-3 11-1 11 4 0 3-4 2-5 7-3 0-2-4-5-5S0 5 3 3z"/>',
    table2: '<path class="s" d="M1 2h14v12H1zM1 6h14M1 10h14M6 2v12M10 2v12"/>',
    mtext: '<path class="s" d="M2 10L6 1h1l4 9M4 7h5M1 12h14M1 15h14M12 9h3"/>',
    dim: '<path class="b" d="M1 4v9M15 4v9M2 8h12"/><path class="bf" d="M1 8l4-2v4zM15 8l-4-2v4z"/>',
    dimlin: '<path class="b" d="M2 1v13M14 1v13M2 5h12M5 3L2 5l3 2M11 3l3 2-3 2"/>',
    leader: '<path class="b" d="M2 5h5M2 5l2-2M7 13l4-9 4 9M9 10h5"/>',
    move: '<path class="b" d="M8 1v14M1 8h14"/><path class="bf" d="M8 0l3 4H5zM8 16l3-4H5zM0 8l4-3v6zM16 8l-4-3v6z"/>',
    copyobj: '<path class="s" d="M2 2h6v6H2z"/><path class="b" d="M9 9h6v6H9zM10 3h3v3M4 10v4h3"/>',
    stretch: '<path class="s" d="M2 1h5v14H2z"/><path class="b" d="M7 1l7 14H2"/>',
    rotate: '<path class="b" d="M11 2a6.500 6.500 0 1 0 3 5M11 1v4h4"/><path class="sf" d="M7 7h2v2H7z"/>',
    mirror: '<path class="s" d="M6 2v11H1z"/><path class="b" d="M10 2v11h5zM8 1v14"/>',
    scale: '<path class="b" d="M1 2h14v12H1z"/><path class="s" d="M1 8h6v6H1zM8 8l5-4M9 4h4v4"/>',
    trim: '<path class="b" d="M1 4h8v8H1zM12 5h3v7h-4"/><path class="s" d="M8 15l4-14"/>',
    extend: '<path class="b" d="M1 8h9"/><path class="s" d="M9 15l5-13"/>',
    break: '<path class="s" d="M9 4H1v9h14V4h-3"/>',
    breakat: '<path class="s" d="M4 4H1v9h14V4h-3"/><path class="bf" d="M4 4h2v2H4zM10 4h2v2h-2z"/>',
    join: '<path class="s" d="M4 4H1v9h14V4h-3"/><path class="b" d="M4 4v4M12 4v4M6 7h4"/>',
    fillet: '<path class="s" d="M2 15V9c0-4 3-7 7-7h6"/><path class="b" d="M2 9V2h7"/>',
    chamfer: '<path class="b" d="M2 15V2h13"/><path class="s" d="M2 9l7-7"/>',
    array: '<path class="b" d="M1 2h6v4H1zM9 2h6v4H9zM1 10h6v4H1zM9 10h6v4H9z"/>',
    explode: '<circle class="s" cx="7" cy="9" r="5"/><path class="o" d="M12 4l3-3M8 2h2"/>',
    offset: '<path class="s" d="M5 15V2h7v4"/><path class="b" d="M9 15V7h5M5 2h6"/>',
    layers: '<path class="s" d="M1 9l4-6h10l-4 6zM1 12h10l4-6M1 15h10l4-6M1 6l3-5h11"/>',
    layer: '<path class="s" d="M1 8l4-5h10l-4 5zM1 11h10l4-5M1 14h10l4-5"/>',
    layerb: '<path class="s" d="M1 8l4-5h10l-4 5zM1 11h6"/><circle class="bf" cx="11" cy="12" r="3.5"/>',
    layero: '<path class="s" d="M1 8l4-5h10l-4 5zM1 11h6M1 14h5"/><circle class="of" cx="12" cy="12" r="3"/>',
    layery: '<path class="s" d="M2 8l4-5h9l-4 5zM4 14h8"/><path class="o" d="M2 11h8"/>',
    bulb: '<circle cx="8" cy="6" r="5" fill="#ffc83d"/><path class="sf" d="M6 11h4v4H6z"/>',
    sun: '<circle cx="8" cy="8" r="4" fill="#ffc21a"/><path stroke="#ffc21a" stroke-width="2" d="M8 0v16M0 8h16M2 2l12 12M14 2L2 14"/>',
    lock: '<path class="o" d="M3 8V3h5v4"/><path fill="#b69262" d="M5 7h9v7H5z"/>',
    printer: '<path class="sf" d="M4 2h8v4h3v6h-3v3H4v-3H1V6h3z"/>',
    swatch: '<path fill="#fff" d="M1 1h14v14H1z"/>',
    insert: '<path class="s" d="M1 2h8v6H1zM9 3h6v7h-4"/><circle class="s" cx="8" cy="10" r="4.5"/><path class="b" d="M12 2h3v3"/>',
    block: '<path class="s" d="M7 2h8v7H7z"/><circle class="s" cx="6" cy="10" r="4.5"/>',
    blockedit: '<path class="s" d="M2 2h9v7H2z"/><circle class="s" cx="8" cy="9" r="4.5"/><path class="o" d="M10 15l5-6"/>',
    blockattr: '<path class="s" d="M2 6l5-4 8 1-4 6zM2 6l2 8 7-5"/><path class="o" d="M4 12l4-4"/>',
    match: '<path class="s" d="M10 7V1h2v6M6 7h9v2H6z"/><path class="of" d="M5 9h10l-2 5H2z"/><path stroke="#2f7fe0" stroke-width="1.5" d="M0 15h12"/>',
    group: '<path class="s" d="M5 2h7v8H8M14 1c2 1 0 5 2 6-2 1 0 6-2 7"/><circle class="s" cx="5" cy="9" r="4"/>',
    ungroup: '<path class="s" d="M5 2h7v7H8M14 1c2 1 0 5 2 6"/><circle class="s" cx="5" cy="9" r="4"/><path stroke="#f02010" stroke-width="2" d="M9 9l6 6M15 9l-6 6"/>',
    measure: '<path class="s" d="M1 1v6M15 1v6M1 4h14M4 3L2 4l2 1M12 3l2 1-2 1"/><path class="of" d="M1 9h14v5H1z"/><path d="M3 9v3M6 9v3M9 9v3M12 9v3" stroke="#6b4a10"/>',
    pick: '<path class="s" d="M2 2l4 10 2-4 4-1zM9 9l5 5M10 2h5"/>',
    select: '<path class="s" stroke-dasharray="2 2" d="M2 1h12v14H2z"/><path class="sf" d="M6 5l6 5-4 1-2 3z"/>',
    copybase: '<path class="s" d="M4 2h5v9H4zM8 4h4v8H8z"/><path stroke="#4aa04a" stroke-width="1.6" d="M3 4v9"/><path class="r" d="M3 14h12"/>',
    grid: '<path class="s" d="M1 2h14v12H1zM8 2v12M1 8h14"/>',
    snaptrack: '<path class="s" stroke-dasharray="2 1" d="M1 8h14"/><path class="rf" d="M2 7h3v2H2z"/>',
    snapfrom: '<path class="s" d="M2 14L14 3"/><path class="rf" d="M12 2h2v2h-2z"/>',
    snapend: '<path class="s" d="M3 13L13 3"/><path class="r" d="M11 2h3v3h-3z"/>',
    snapmid: '<path class="s" d="M3 13L13 3"/><path class="r" d="M7 6h3v3H7z"/>',
    snapint: '<path class="s" d="M2 13l8-5 4 5M8 9l5-6"/>',
    snapcen: '<circle class="s" cx="8" cy="8" r="6"/><circle class="rf" cx="8" cy="8" r="1.5"/>',
    snapnode: '<path class="s" d="M2 2h12v12H2z"/><circle class="rf" cx="8" cy="8" r="2"/>',
    snapperp: '<path class="s" d="M8 2v11M2 13h12"/><path class="rf" d="M7 11h3v3H7z"/>',
    snappar: '<path class="s" d="M2 12L12 2M5 14L14 5"/>',
    snaptan: '<circle class="s" cx="8" cy="9" r="5"/><path class="r" d="M4 3l4 1"/>',
    snapquad: '<circle class="s" cx="8" cy="8" r="5.5"/><path class="rf" d="M7 1h2v3H7zM7 13h2v2H7z"/>',
    snapins: '<path class="s" d="M2 3h7v6H2zM7 7h7v6H7z"/>',
    snapnear: '<path class="rf" d="M7 7h3v3H7z"/>',
    snapx: '<path class="s" d="M2 2l12 12M14 2L2 14"/><path class="rf" d="M7 7h2v2H7z"/>',
    snapext: '<path class="s" d="M3 14L12 2M5 8h9"/><path class="r" d="M6 10l4-4"/>',
    snapang: '<path class="s" d="M3 3l9 10H2M11 13h4"/>',
    snapoff: '<path stroke="#e0301c" stroke-width="3" d="M6 7l7 7M13 7l-7 7"/><path class="s" d="M2 3h3"/>',
    snaparc: '<path class="s" d="M2 14V7l3-4h9v3M5 14V7h5"/>',
    snapbox: '<path fill="#f3dddd" d="M2 2h13v12H2z"/><path class="r" d="M2 2h13v12H2z"/>',
    snapset: '<path class="s" d="M2 4h6v8H2M12 2v12"/><path class="sf" d="M10 5h5v9h-5z"/>',
    snapdot: '<path class="s" stroke-dasharray="3 2" d="M2 14V3h12v11"/>',
    front: '<path class="b" d="M1 6h9v8H1z"/><path class="s" d="M8 4V2h7v6h-3M5 6V4h7v6h-2"/>',
    back: '<path class="s" d="M1 8h7v6H1zM4 8V5h7v6H8"/><path class="b" d="M8 5V2h7v7h-4"/>',
    above: '<path class="b" d="M1 2h9v8H1z"/><path class="s" d="M10 6h5v8H6v-4"/>',
    under: '<path class="s" d="M1 6h9v8H1z"/><path class="b" d="M6 6V2h9v8h-5"/>',
    viewl: '<path class="s" d="M1 3h14v11H5"/><path class="bf" d="M1 6h9v5H1z"/>',
    viewr: '<path class="s" d="M1 6h12v9H1z"/><path class="bf" d="M5 1h10v5H5z"/>',
    first: '<path class="sf" d="M2 1h3v14H2zM14 1v14L5 8z"/>',
    prev: '<path class="sf" d="M12 1v14L3 8z"/>',
    next: '<path class="sf" d="M4 1v14l9-7z"/>',
    last: '<path class="sf" d="M11 1h3v14h-3zM2 1v14l9-7z"/>',
    list: '<path class="s" d="M1 1h14v14H1zM4 6h8M4 10h8"/>',
    filter: '<path class="s" d="M1 2h12L8 8v6l-2-2V8z"/><path class="of" d="M10 9h5v6h-5z"/>',
    eye: '<path class="sf" d="M0 8c3-7 13-7 16 0-3 7-13 7-16 0z"/><circle class="bf" cx="8" cy="8" r="2.5"/>',
    up: '<path class="k" d="M4 10l4-4 4 4"/>',
    down: '<path class="k" d="M4 6l4 4 4-4"/>',
    box3d: '<path class="s" d="M8 1l6 3v8l-6 3-6-3V4zM2 4l6 3 6-3M8 7v8M5 2.5l6 3M11 2.5l-6 3M2 8l6 3 6-3"/>',
    balloon: '<path class="s" d="M6 12L2 8C0 3 5 1 8 1s8 2 6 7l-4 4zM6 12C4 6 6 2 8 1c2 1 4 5 2 11M6 13h4v2H6z"/>',
    sliders: '<path class="s" d="M0 3h8M12 3h4M0 8h2M6 8h10M0 13h8M12 13h4"/><circle class="s" cx="10" cy="3" r="1.8"/><circle class="s" cx="4" cy="8" r="1.8"/><circle class="s" cx="10" cy="13" r="1.8"/>',
    stack: '<path class="s" d="M8 1l7 4-7 4-7-4zM1 8l7 4 7-4M1 11l7 4 7-4"/>',
    frame: '<path class="sf" d="M1 2h14v12H1z"/><path class="bf" d="M1 2h5v2H1zM9 9h6v5H9z"/>',
    note: '<path class="b" d="M1 14l6-8h8M8 6l4 5"/><path class="bf" d="M1 15l1-4 3 3z"/>',
    bearing: '<path class="sf" d="M5 2h6v3H5zM5 11h6v3H5zM1 6h5v4H1zM10 6h5v4h-5z"/><path class="r" d="M0 8h16"/>',
    sheet2: '<path class="sf" d="M2 1h7v9H2z"/><circle class="s" cx="10" cy="10" r="4"/>',
    bolt: '<path class="b" d="M1 14h14"/><path class="of" d="M9 1l4 1-3 4h2l-5 6 1-5H6z"/>',
    rough: '<path class="b" d="M1 5l4 8 6-11M7 6l3 7 5-10M1 8h9"/>',
    magnify: '<path class="sf" d="M3 2h9v7l3 5-5-3H3z"/><circle class="of" cx="6" cy="6" r="4"/>',
    textb: '<path class="b" d="M1 4h5M3.5 4v8M7 9h3M7 6v6h3M11 6l4 6M15 6l-4 6"/>',
    door: '<path class="s" d="M3 1h8v14H3z"/><path class="sf" d="M9 2h3v12H9z"/>',
    gear: '<circle class="sf" cx="8" cy="8" r="5"/><path class="of" d="M2 2l4 2-2 3zM10 10l4 1-2 3z"/>',
    parts: '<path class="bf" d="M2 8h6v6H2zM8 2h5v5H8z"/><path class="sf" d="M9 9h6v5H9z"/>',
    part: '<path class="sf" d="M1 2h7v6H1zM8 8h6v6H8z"/><circle class="k" cx="9" cy="7" r="3"/><path class="s" d="M2 13h4"/>',
    pin: '<path class="sf" d="M1 6h13v4H1z"/><path class="r" d="M5 8h10"/>',
    bom: '<path class="sf" d="M2 2h12v13H2z"/><path class="b" d="M2 6h12M2 10h12M6 2v13M10 2v13"/>',
    globe2: '<circle class="bf" cx="8" cy="8" r="6.5"/><path class="of" d="M3 5l4-2 3 4-4 3z"/><path fill="#5fae4a" d="M8 9l5-1-2 5z"/>',
    dimb: '<path class="b" d="M2 13h12V5M8 5v8M4 9v4M11 8v5"/>',
    dimtag: '<path fill="#9cc5ee" d="M0 3h16v10H0z"/><path class="b" d="M3 6h3v4H3M8 6v4M11 6h3M11 10h3"/>',
    corner: '<path fill="none" stroke="#2e8f6a" stroke-width="2" d="M3 4h9v11"/>',
    angle: '<path fill="none" stroke="#a59a2c" stroke-width="2" d="M3 2v12h12M3 8l6 6"/>',
    shaft: '<path class="sf" d="M4 1h8v11H4z"/><path class="k" d="M6 4l4 5M10 4L6 9"/><path class="r" d="M1 14h14"/>',
    nut: '<path class="sf" d="M3 4h10v10H3zM6 1h4v3H6z"/><path class="r" d="M8 3v12M5 8h6"/>',
    section: '<path class="sf" d="M2 2h12v3H2zM2 11h12v3H2zM2 5h2v6H2z"/><path class="r" d="M4 8h11"/>',
    cross: '<path class="r" d="M1 8h14"/><path class="sf" d="M6 2h4v3H6zM6 11h4v3H6z"/>',
    spring: '<path class="s" d="M2 4h12M2 8h12M2 12h12"/>',
    crate: '<path class="sf" d="M2 5h12v10H2zM4 1h5v4H4z"/><path class="r" d="M8 6v8"/>',
    screw: '<path class="sf" d="M5 3h6v5h4v4H1V8h4z"/><path class="r" d="M8 2v12"/>',
    axis: '<path class="s" d="M6 2v12M6 2h4M6 14h4"/><path class="r" d="M1 8h14"/>',
    elbow: '<path class="sf" d="M1 14c0-8 4-12 14-12v6c-5 0-8 1-8 6z"/>',
    seat: '<path class="sf" d="M3 2h10v3h-2v6h3v3H2v-3h3V5H3z"/><path class="r" d="M8 1v14"/>',
    hub: '<path class="sf" d="M2 6h4v5H2zM8 3h3v3H8zM8 10h3v3H8z"/><path class="r" d="M6 8h9"/>',
    flange: '<path class="sf" d="M6 5h4v4h5v3H1V9h5z"/><path class="r" d="M8 1v12"/>',
    key: '<path class="sf" d="M2 4h5v8H2zM9 4h5v8H9z"/><path class="r" d="M8 6v6"/>',
    boss: '<circle class="sf" cx="8" cy="6" r="4"/><path class="sf" d="M2 13l3-5h6l3 5z"/>'
};

function iconSvg(name) {
    return '<svg viewBox="0 0 16 16">' + ICONS[name] + '</svg>';
}

document.querySelectorAll('[data-icon]').forEach(el => {
    el.innerHTML = iconSvg(el.dataset.icon);
});

// "|" is a separator, a trailing "*" marks a pressed tool
document.querySelectorAll('[data-tools]').forEach(bar => {
    bar.dataset.tools.split(' ').forEach(item => {
        if (item === '|') {
            const sep = document.createElement('span');
            sep.className = 'sep';
            bar.appendChild(sep);
            return;
        }
        const name = item.replace('*', '');
        const button = document.createElement('button');
        button.type = 'button';
        button.className = item.endsWith('*') ? 'tool on' : 'tool';
        button.setAttribute('aria-label', name);
        button.innerHTML = iconSvg(name);
        bar.appendChild(button);
    });
});
```
